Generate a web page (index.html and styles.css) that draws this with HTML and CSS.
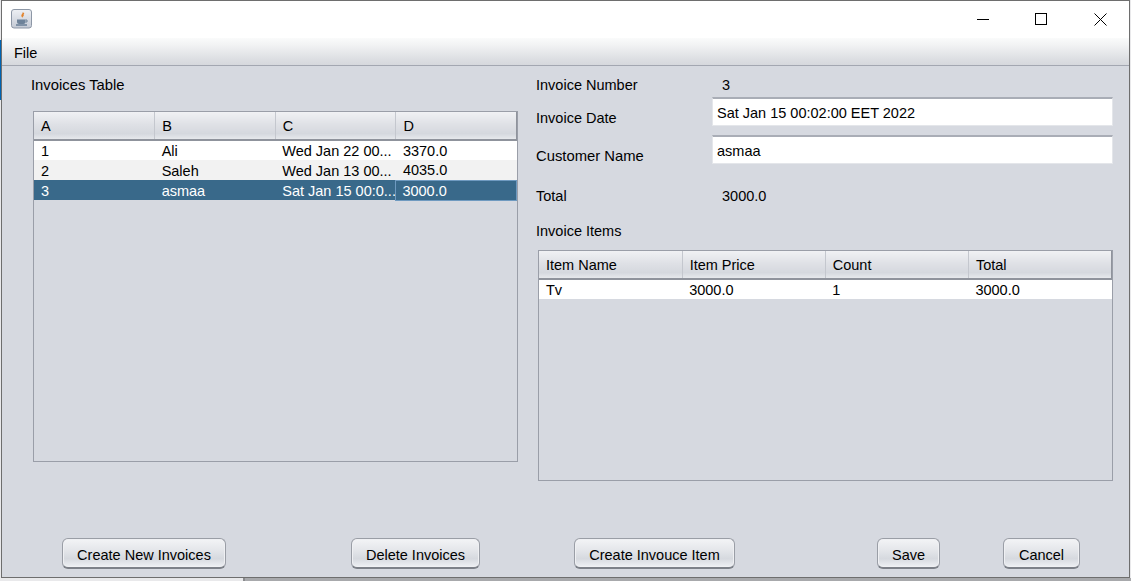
FILE: index.html
```html
<html>
    <head>
        <title>Invoices</title>
        <link rel="stylesheet" href="styles.css">
    </head>
    <body>
        <div class="behind-edge"></div>
        <div class="behind-strip"></div>
        <div class="window">
            <div class="titlebar">
                <svg class="app-icon" width="21" height="20" viewBox="0 0 21 20">
                    <defs>
                        <linearGradient id="iconbg" x1="0" y1="0" x2="0" y2="1">
                            <stop offset="0" stop-color="#eef0f4"/>
                            <stop offset="1" stop-color="#c3c9d4"/>
                        </linearGradient>
                    </defs>
                    <rect x="0.5" y="0.5" width="20" height="18.500" rx="2.500" fill="url(#iconbg)" stroke="#8d97a6"/>
                    <path d="M11.500 3c1 1.500-2 2.500-1 4.500.3.600.8 1 1 1.500-.2-1.200 2.200-2.300 1-3.500 1.300-.5 1-1.500-1-2.500z" fill="#e2832c"/>
                    <path d="M6 10.500h8.500v2.500c0 1.200-1 2-2 2h-4.500c-1 0-2-.8-2-2z" fill="#6d8299"/>
                    <path d="M14.500 11h1.500v2h-1.500" fill="none" stroke="#6d8299"/>
                    <path d="M5 16h11" stroke="#4f6a86" stroke-width="1.200"/>
                </svg>
                <div class="controls">
                    <svg width="12" height="12" viewBox="0 0 12 12" class="ctl-min"><path d="M0 6.500h12" stroke="#000"/></svg>
                    <svg width="13" height="13" viewBox="0 0 13 13" class="ctl-max"><rect x="0.500" y="0.500" width="11" height="11" fill="none" stroke="#000"/></svg>
                    <svg width="13" height="13" viewBox="0 0 13 13" class="ctl-close"><path d="M0.500 0.500l12 12M12.500 0.500l-12 12" stroke="#000"/></svg>
                </div>
            </div>

            <div class="menubar"><span class="menu-item">File</span></div>

            <div class="content">
                <div class="panes">
                    <div class="left-pane">
                        <p class="pane-title">Invoices Table</p>
                        <div class="table-box invoices">
                            <table>
                                <thead>
                                    <tr><th>A</th><th>B</th><th>C</th><th>D</th></tr>
                                </thead>
                                <tbody>
                                    <tr><td>1</td><td>Ali</td><td>Wed Jan 22 00...</td><td>3370.0</td></tr>
                                    <tr class="alt"><td>2</td><td>Saleh</td><td>Wed Jan 13 00...</td><td>4035.0</td></tr>
                                    <tr class="selected"><td>3</td><td>asmaa</td><td>Sat Jan 15 00:0...</td><td class="focus">3000.0</td></tr>
                                </tbody>
                            </table>
                        </div>
                    </div>

                    <div class="right-pane">
                        <div class="row row-number">
                            <span class="field-label">Invoice Number</span>
                            <span class="field-value">3</span>
                        </div>
                        <div class="row row-date">
                            <span class="field-label low">Invoice Date</span>
                            <input class="field-input" type="text" value="Sat Jan 15 00:02:00 EET 2022">
                        </div>
                        <div class="row row-customer">
                            <span class="field-label low wide">Customer Name</span>
                            <input class="field-input" type="text" value="asmaa">
                        </div>
                        <div class="row row-total">
                            <span class="field-label">Total</span>
                            <span class="field-value">3000.0</span>
                        </div>
                        <div class="row row-items">
                            <span class="field-label">Invoice Items</span>
                        </div>
                        <div class="table-box items">
                            <table>
                                <thead>
                                    <tr><th>Item Name</th><th>Item Price</th><th>Count</th><th>Total</th></tr>
                                </thead>
                                <tbody>
                                    <tr><td>Tv</td><td>3000.0</td><td>1</td><td>3000.0</td></tr>
                                </tbody>
                            </table>
                        </div>
                    </div>
                </div>

                <div class="actions">
                    <button class="btn btn-new">Create New Invoices</button>
                    <button class="btn btn-delete">Delete Invoices</button>
                    <button class="btn btn-item">Create Invouce Item</button>
                    <button class="btn btn-save">Save</button>
                    <button class="btn btn-cancel">Cancel</button>
                </div>
            </div>
        </div>
    </body>
</html>
```

FILE: styles.css
```css
html, body{
    margin: 0;
    height: 581px;
    overflow: hidden;
}

body{
    background-color: #e9e9eb;
    font-family: "Liberation Sans", Arial, sans-serif;
    font-size: 14.5px;
    color: #000;
}

.behind-edge{
    position: absolute;
    left: 0;
    top: 40px;
    width: 2px;
    height: 60px;
    background-color: #0063b1;
}

.behind-strip{
    position: absolute;
    left: 243px;
    right: 0;
    top: 578px;
    height: 3px;
    background-color: #a8a9ac;
    border-left: 2px solid #8a8b8e;
}

.window{
    position: relative;
    width: 1127px;
    height: 576px;
    margin-left: 1px;
    border: 1px solid #6e6e6e;
    background-color: #d6d9e0;
}

.titlebar{
    height: 37px;
    background-color: #fff;
    display: flex;
    align-items: flex-start;
    justify-content: space-between;
}

.app-icon{
    margin: 8px 0 0 9px;
}

.controls{
    display: flex;
}

.ctl-min{
    margin: 12px 0 0 0;
}

.ctl-max{
    margin: 12px 0 0 46px;
}

.ctl-close{
    margin: 12px 22px 0 46px;
}

.menubar{
    height: 27px;
    line-height: 30px;
    padding-left: 12px;
    background: linear-gradient(#fafbfb 0%, #f2f3f4 25%, #dcdee2 80%, #d6d8dd 100%);
    border-bottom: 1px solid #a3a7b1;
}

.panes{
    display: flex;
    height: 472px;
}

.left-pane{
    width: 534px;
    padding-top: 9px;
}

.pane-title{
    margin: 0 0 16px 29px;
    line-height: 20px;
    font-size: 14.8px;
}

.table-box{
    box-sizing: border-box;
    border: 1px solid #9a9ea8;
}

.invoices{
    width: 485px;
    height: 351px;
    margin-left: 31px;
}

.items{
    width: 575px;
    height: 231px;
    margin: 9px 0 0 2px;
}

table{
    border-collapse: collapse;
    table-layout: fixed;
    width: 100%;
    font-size: 14.5px;
}

th{
    height: 28px;
    padding: 1px 0 0 7px;
    font-weight: normal;
    text-align: left;
    background: linear-gradient(#f0f1f4 0%, #dfe1e6 45%, #d5d8de 80%, #e6e8ec 100%);
    border-right: 1px solid #c4c7ce;
    border-bottom: 2px solid #8f939c;
    box-sizing: border-box;
}

th:last-child{
    border-right: 1px solid #8f939c;
}

td{
    height: 20px;
    padding: 1px 0 0 7px;
    background-color: #fff;
    white-space: nowrap;
    overflow: hidden;
    box-sizing: border-box;
}

.alt td{
    background-color: #f2f2f2;
}

.selected td{
    background-color: #39698a;
    color: #fff;
}

.selected td.focus{
    border: 1px solid #6f9ac0;
    padding: 1px 0 0 6px;
}

.right-pane{
    width: 580px;
    padding-top: 9px;
}

.row{
    display: flex;
    align-items: flex-start;
}

.row-number{
    height: 20px;
}

.row-date{
    height: 30px;
    margin-top: 2px;
}

.row-customer{
    height: 30px;
    margin-top: 8px;
}

.row-total{
    height: 20px;
    margin-top: 21px;
}

.row-items{
    height: 20px;
    margin-top: 15px;
}

.field-label{
    width: 176px;
    line-height: 20px;
}

.field-label.low{
    padding-top: 11px;
}

.field-label.wide{
    font-size: 14.8px;
}

.field-value{
    padding-left: 10px;
    line-height: 20px;
}

.field-input{
    box-sizing: border-box;
    width: 401px;
    height: 29px;
    padding: 2px 0 0 4px;
    border: 1px solid #e4e6ea;
    border-top: 2px solid #a9adb6;
    background-color: #fff;
    font-family: "Liberation Sans", Arial, sans-serif;
    font-size: 14.5px;
    color: #000;
    outline: none;
}

.actions{
    display: flex;
    height: 31px;
    padding-left: 60px;
}

.btn{
    height: 31px;
    padding: 4px 0 0 0;
    border: 1px solid #9a9ea6;
    border-bottom: 2px solid #7c8088;
    border-radius: 6px;
    background: linear-gradient(#f3f4f6 0%, #e4e6ea 40%, #d6d9df 70%, #eef0f4 100%);
    box-shadow: inset 0 0 0 1px #eff0f3;
    font-family: "Liberation Sans", Arial, sans-serif;
    font-size: 14.5px;
    color: #000;
}

.btn-new{
    width: 164px;
}

.btn-delete{
    width: 129px;
    margin-left: 125px;
}

.btn-item{
    width: 161px;
    margin-left: 94px;
}

.btn-save{
    width: 63px;
    margin-left: 142px;
}

.btn-cancel{
    width: 77px;
    margin-left: 63px;
}
```
